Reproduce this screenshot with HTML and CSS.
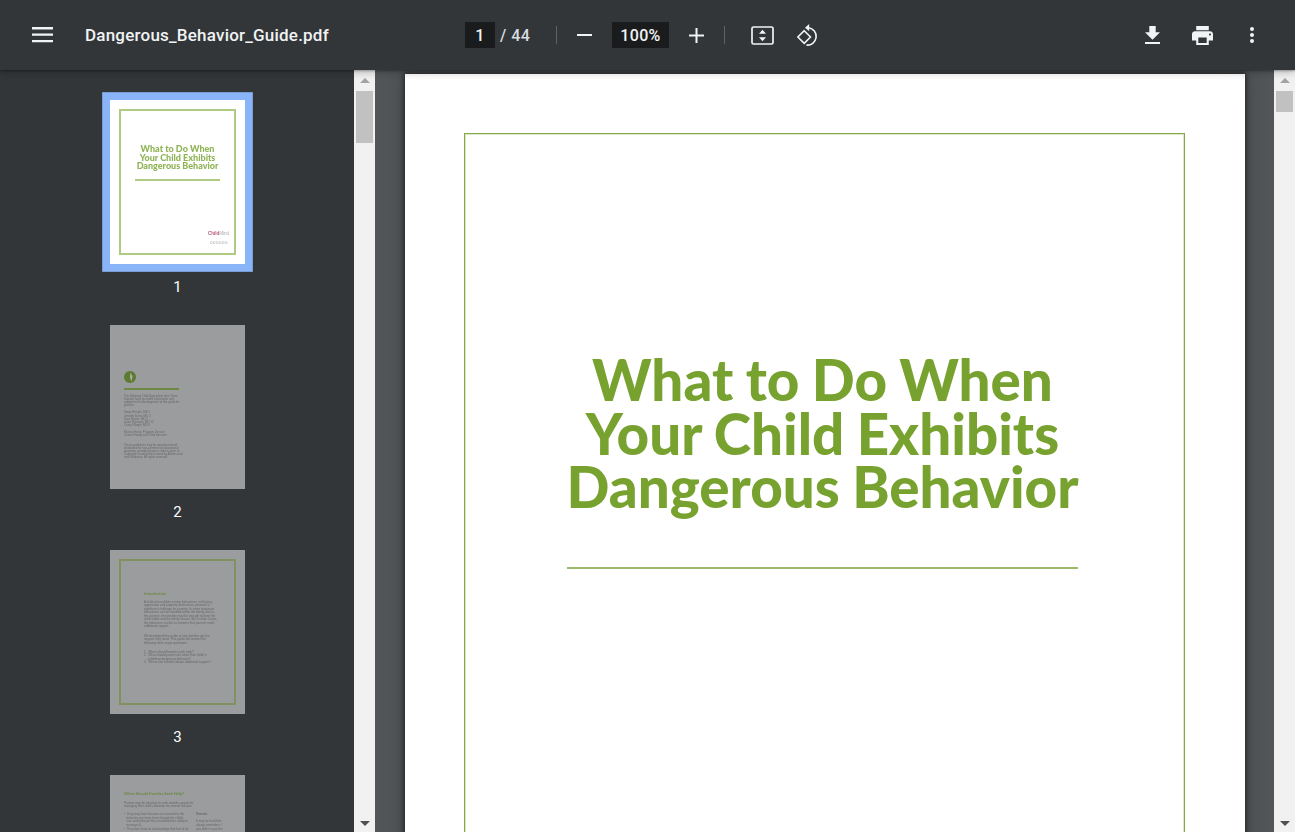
FILE: index.html
```html
<!DOCTYPE html>
<html lang="en">
<head>
<meta charset="utf-8">
<title>Dangerous_Behavior_Guide.pdf</title>
<link rel="stylesheet" href="styles.css">
</head>
<body>
<header class="toolbar">
  <button class="icon-btn menu" aria-label="Menu">
    <svg width="21" height="16" viewBox="0 0 21 16"><path fill="#f1f3f4" d="M0 0h21v2.4H0zM0 6.4h21v2.4H0zM0 12.9h21v2.4H0z"/></svg>
  </button>
  <div class="title">Dangerous_Behavior_Guide.pdf</div>
  <div class="pager">
    <span class="field page-field">1</span>
    <span class="count">/ 44</span>
  </div>
  <span class="sep sep-a"></span>
  <button class="icon-btn minus" aria-label="Zoom out">
    <svg width="15" height="2" viewBox="0 0 15 2"><path fill="#f1f3f4" d="M0 0h15v2H0z"/></svg>
  </button>
  <span class="field zoom-field">100%</span>
  <button class="icon-btn plus" aria-label="Zoom in">
    <svg width="15" height="15" viewBox="0 0 15 15"><path fill="#f1f3f4" d="M6.5 0h2v6.5H15v2H8.500V15h-2V8.500H0v-2h6.500z"/></svg>
  </button>
  <span class="sep sep-b"></span>
  <button class="icon-btn fit" aria-label="Fit to page">
    <svg width="23" height="19" viewBox="0 0 23 19"><rect x="1" y="1" width="21" height="17" rx="1.500" fill="none" stroke="#f1f3f4" stroke-width="1.700"/><path fill="#f1f3f4" d="M11.500 3.800l3.500 4h-7zM11.500 15.200l-3.500-4h7z"/></svg>
  </button>
  <button class="icon-btn rotate" aria-label="Rotate">
    <svg width="23" height="23" viewBox="0 0 23 23"><path fill="none" stroke="#f1f3f4" stroke-width="1.600" d="M8.200 6.700l6.300 6.300-6.300 6.300-6.300-6.300zM12.600 3.800a8.200 8.200 0 1 1-2.200 17.200"/><path fill="#f1f3f4" d="M13.200 0v7.300L9 3.700z"/></svg>
  </button>
  <div class="spacer"></div>
  <button class="icon-btn download" aria-label="Download">
    <svg width="15" height="18" viewBox="0 0 15 18"><path fill="#f1f3f4" d="M15 6.300h-4.300V0H4.300v6.300H0l7.500 7.500zM0 15.900V18h15v-2.100z"/></svg>
  </button>
  <button class="icon-btn print" aria-label="Print">
    <svg width="21" height="19" viewBox="0 0 21 19"><path fill="#f1f3f4" d="M18 5.300H3c-1.700 0-3 1.300-3 3v6.300h4.200V19h12.600v-4.400H21V8.300c0-1.700-1.300-3-3-3zM14.700 16.900H6.300v-5.300h8.400zM18 9.500c-.6 0-1-.5-1-1s.4-1 1-1 1 .5 1 1-.4 1-1 1zM16.800 0H4.200v4.200h12.600z"/></svg>
  </button>
  <button class="icon-btn more" aria-label="More">
    <svg width="4" height="16" viewBox="0 0 4 16"><circle cx="2" cy="2" r="2" fill="#f1f3f4"/><circle cx="2" cy="8" r="2" fill="#f1f3f4"/><circle cx="2" cy="14" r="2" fill="#f1f3f4"/></svg>
  </button>
</header>

<main class="content">
  <aside class="sidebar">
    <div class="thumbs">
      <figure class="thumb-item">
        <div class="thumb selected">
          <div class="t1-frame">
            <div class="t1-title">What to Do When<br>Your Child Exhibits<br>Dangerous Behavior</div>
            <div class="t1-rule"></div>
            <div class="t1-logo"><span class="t1-logo-red">Child</span>Mind</div>
            <div class="t1-dots">oooooo</div>
          </div>
        </div>
        <figcaption>1</figcaption>
      </figure>
      <figure class="thumb-item">
        <div class="thumb dim t2">
          <svg class="globe" width="12" height="12" viewBox="0 0 12 12"><circle cx="6" cy="6" r="6" fill="#5c7a32"/><path d="M6.500 1.500l2 4-1 5-1.500-4z" fill="#aab39b"/></svg>
          <div class="t2-rule"></div>
          <p class="tiny">The following Child Specialists from Team<br>Support have provided information and<br>support in the development of this guide for<br>parents.</p>
          <p class="tiny t2-b">Serge Bender, MD 1</p>
          <p class="tiny t2-c">Jennifer Dunn, MD 2<br>Sara Hunter, MD 1<br>Linda Peterson, MD 12<br>Cheryl Wright, MD 6</p>
          <p class="tiny t2-d">Marisa Harris, Program Director<br>Center Family and Child Services</p>
          <p class="tiny t2-e">These guidelines may be reproduced and<br>distributed for non-commercial educational<br>purposes, provided proper credit is given to<br>Copyright of authorities named by Autism and<br>new Guidance. All rights reserved.</p>
        </div>
        <figcaption>2</figcaption>
      </figure>
      <figure class="thumb-item">
        <div class="thumb dim t3">
          <div class="t3-frame">
            <div class="t3-head">Introduction</div>
            <p class="tiny">A child who exhibits severe behaviours, self-injury,<br>aggression and property destruction, presents a<br>significant challenge for parents. In some instances<br>behaviours can be handled within the family, that is,<br>the parents' intervention may be enough to keep the<br>child stable and the family secure. But in other cases,<br>the behaviors can be so extreme that parents need<br>additional support.</p>
            <p class="tiny">We developed this guide to help families get the<br>support they need. This guide will answer the<br>following three major questions:</p>
            <p class="tiny">1. &nbsp;When should families seek help?<br>2. &nbsp;What should parents do when their child is<br>&nbsp;&nbsp;&nbsp;&nbsp;exhibiting dangerous behavior?<br>3. &nbsp;Where can families obtain additional support?</p>
          </div>
        </div>
        <figcaption>3</figcaption>
      </figure>
      <figure class="thumb-item">
        <div class="thumb dim t4">
          <div class="t4-head">When Should Families Seek Help?</div>
          <p class="tiny">Parents may be reluctant to seek outside support for<br>managing their child's behavior for several reasons:</p>
          <div class="t4-cols">
            <p class="tiny">• &nbsp;They may have become accustomed to the<br>&nbsp;&nbsp;&nbsp;behavior over time (even though the child's<br>&nbsp;&nbsp;&nbsp;size and behavior has exceeded their ability to<br>&nbsp;&nbsp;&nbsp;manage it).<br>• &nbsp;They don't want to acknowledge that fact of all</p>
            <p class="tiny t4-side"><b>Parents</b><br><br>It may be hard that<br>always remember I<br>you didn't cause the</p>
          </div>
        </div>
      </figure>
    </div>
    <div class="scrollbar">
      <span class="arrow up"></span>
      <span class="sb-thumb sb-long"></span>
      <span class="track"></span>
      <span class="arrow down"></span>
    </div>
  </aside>

  <section class="viewer">
    <article class="page">
      <div class="frame">
        <h1 class="doc-title">What to Do When<br>Your Child Exhibits<br>Dangerous Behavior</h1>
        <div class="doc-rule"></div>
      </div>
    </article>
  </section>

  <div class="scrollbar">
    <span class="arrow up"></span>
    <span class="sb-thumb sb-short"></span>
    <span class="track"></span>
    <span class="arrow down"></span>
  </div>
</main>
</body>
</html>
```
FILE: styles.css
```css
* { box-sizing: border-box; }
html, body { height: 100%; }
body {
  margin: 0;
  width: 1295px;
  height: 832px;
  overflow: hidden;
  display: flex;
  flex-direction: column;
  font-family: Roboto, "Liberation Sans", sans-serif;
  background: #323639;
}

/* toolbar */
.toolbar {
  flex: none;
  height: 70px;
  display: flex;
  align-items: center;
  background: #323639;
  color: #f1f3f4;
  position: relative;
  z-index: 5;
  box-shadow: 0 1px 2px rgba(0,0,0,.3), 0 3px 8px rgba(0,0,0,.2);
}
.icon-btn {
  flex: none;
  display: flex;
  align-items: center;
  justify-content: center;
  padding: 0;
  border: 0;
  background: none;
}
.menu { margin-left: 32px; }
.title {
  flex: none;
  width: 380px;
  margin-left: 32px;
  font-size: 17px;
  font-weight: 500;
  letter-spacing: .21px;
  color: #f1f3f4;
}
.pager { flex: none; display: flex; align-items: center; }
.field {
  display: flex;
  align-items: center;
  justify-content: center;
  height: 26px;
  background: #191b1c;
  color: #f1f3f4;
  font-size: 16px;
  letter-spacing: .3px;
  font-weight: 500;
}
.page-field { width: 30px; }
.count { margin-left: 5px; font-size: 16px; font-weight: 500; letter-spacing: .5px; color: #dadce0; width: 31px; white-space: nowrap; }
.sep { flex: none; width: 1px; height: 18px; background: #5f6368; }
.sep-a { margin-left: 25px; }
.minus { margin-left: 20px; }
.zoom-field { flex: none; width: 57px; margin-left: 20px; }
.plus { margin-left: 20px; }
.sep-b { margin-left: 20px; }
.fit { margin-left: 26px; }
.rotate { margin-left: 22px; }
.spacer { flex: 1; }
.download { margin-right: 32px; }
.print { margin-right: 37px; }
.more { margin-right: 41px; }

/* content */
.content {
  flex: 1;
  min-height: 0;
  display: flex;
}
.sidebar {
  flex: none;
  width: 375px;
  display: flex;
  background: #323639;
  overflow: hidden;
}
.thumbs {
  width: 354px;
  padding: 30px 0 0 110px;
  overflow: hidden;
}
.thumb-item { margin: 0 0 25px; width: 135px; }
.thumb-item figcaption {
  height: 36px;
  padding-top: 14px;
  text-align: center;
  color: #fff;
  font-size: 15px;
  line-height: 18px;
}
.thumb {
  width: 135px;
  height: 164px;
  background: #fff;
  overflow: hidden;
  color: #333;
}
.thumb.selected { box-shadow: 0 0 0 7.500px #8ab4f8, 0 0 0 8px #6a86b0; overflow: visible; padding: 9px; }
.thumb.dim { background: #9b9c9d; }

.t1-frame {
  width: 117px;
  height: 146px;
  border: 2px solid #afcb83;
  padding-top: 34px;
  text-align: center;
}
.t1-title {
  font-family: Lato, sans-serif;
  font-weight: 900;
  font-size: 9px;
  line-height: 8.600px;
  color: #8fb455;
  filter: blur(.3px);
}
.t1-rule { height: 2px; margin: 8px 14px 0; background: #afcb83; }
.t1-logo {
  font-family: "Liberation Sans", sans-serif;
  font-size: 4.500px;
  line-height: 5px;
  margin: 50px 5px 0 0;
  text-align: right;
  color: #aaa;
  filter: blur(.35px);
}
.t1-logo-red { color: #b85a75; font-weight: 700; }
.t1-dots {
  font-family: "Liberation Sans", sans-serif;
  font-size: 4.500px;
  line-height: 5px;
  margin: 4px 6px 0 0;
  text-align: right;
  color: #aaa;
  letter-spacing: .5px;
  filter: blur(.35px);
}

.tiny {
  margin: 0;
  font-family: "Liberation Sans", sans-serif;
  font-size: 3px;
  line-height: 3.100px;
  white-space: nowrap;
  color: #666768;
  filter: blur(.35px);
}
.t2 { padding: 46px 0 0 14px; }
.globe { display: block; filter: blur(.3px); }
.t2-rule { width: 55px; height: 1.500px; margin: 5px 0 5.500px; background: #6d8a45; filter: blur(.2px); }
.t2 .tiny { font-size: 2.900px; line-height: 3.050px; }
.t2 .t2-b { margin-top: 4px; }
.t2 .t2-c { margin-top: 1px; }
.t2 .t2-d { margin-top: 4px; }
.t2 .t2-e { margin-top: 6px; }
.t3 { padding: 9px; }
.t3-frame {
  width: 117px;
  height: 146px;
  border: 2px solid #7f9260;
  padding: 30px 0 0 23px;
}
.t3-head {
  font-family: Lato, sans-serif;
  font-weight: 700;
  font-size: 4px;
  line-height: 5px;
  color: #6d8a45;
  margin-bottom: 5px;
  filter: blur(.25px);
}
.t3 .tiny + .tiny { margin-top: 6px; }
.t3 .tiny { line-height: 3.450px; font-size: 3.100px; }
.t4 { padding: 16px 0 0 14px; }
.t4-head {
  font-family: Lato, sans-serif;
  font-weight: 700;
  font-size: 4px;
  line-height: 5px;
  color: #6d8a45;
  margin-bottom: 6px;
  filter: blur(.25px);
}
.t4-cols { display: flex; margin-top: 5px; }
.t4-cols .tiny { line-height: 3.600px; }
.t4-side { margin-left: 8px; }

/* scrollbars */
.scrollbar {
  flex: none;
  width: 21px;
  height: 100%;
  background: #f1f1f1;
  display: flex;
  flex-direction: column;
  align-items: center;
}
.arrow { flex: none; width: 0; height: 0; border-left: 5px solid transparent; border-right: 5px solid transparent; }
.arrow.up { margin-top: 8px; border-bottom: 5px solid #a3a3a3; }
.arrow.down { margin-bottom: 6px; border-top: 5px solid #505050; }
.sb-thumb { flex: none; width: 17px; margin-top: 8px; background: #c1c1c1; }
.sb-long { height: 52px; }
.sb-short { height: 21px; }
.track { flex: 1; }

/* viewer */
.viewer {
  flex: 1;
  min-width: 0;
  padding: 4px 0 0 30px;
  background: #525659;
  overflow: hidden;
}
.page {
  width: 840px;
  height: 1086px;
  padding: 59px 60px 0 59px;
  background: #fff;
  box-shadow: 0 0 5px 1px rgba(0,0,0,.55), 0 0 22px rgba(0,0,0,.22);
}
.frame {
  height: 900px;
  border: 1px solid #86a945;
  box-shadow: inset 0 0 0 1px #dbe7c6;
  padding-top: 219px;
}
.doc-title {
  margin: 0;
  padding-right: 4px;
  text-align: center;
  font-family: Lato, sans-serif;
  font-weight: 900;
  font-size: 56.500px;
  line-height: 53.500px;
  word-spacing: -1px;
  color: #78a22f;
}
.doc-rule {
  height: 2px;
  margin: 53px 106px 0 102px;
  background: #9dbb6a;
}
```
